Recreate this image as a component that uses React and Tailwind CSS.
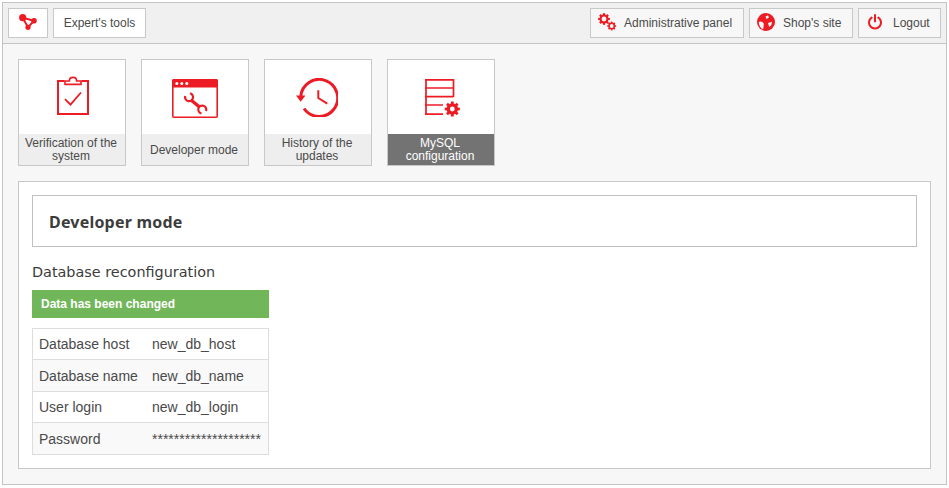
import React from 'react';

const red = '#ed1c24';

const LogoIcon = () => (
  <svg width="20" height="18" viewBox="0 0 20 18" fill="none">
    <path d="M4.7 3.7 L16 6.7 L10 13.3 Z" stroke={red} strokeWidth="2" />
    <circle cx="4.7" cy="3.7" r="3.6" fill={red} />
    <circle cx="16" cy="6.7" r="2.8" fill={red} />
    <circle cx="10" cy="13.3" r="2.6" fill={red} />
  </svg>
);

const Gear = ({ cx, cy, r, hole, bg = '#f7f7f7' }) => {
  const teeth = [0, 45, 90, 135];
  return (
    <g>
      {teeth.map((a) => (
        <rect key={a} x={cx - r * 0.24} y={cy - r * 1.3} width={r * 0.48} height={r * 2.6} fill={red} transform={`rotate(${a} ${cx} ${cy})`} />
      ))}
      <circle cx={cx} cy={cy} r={r} fill={red} />
      <circle cx={cx} cy={cy} r={hole} fill={bg} />
    </g>
  );
};

const GearsIcon = () => (
  <svg width="19" height="20" viewBox="0 0 19 20">
    <Gear cx={6} cy={6} r={4.5} hole={2.4} />
    <Gear cx={13.7} cy={13} r={3.4} hole={1.9} />
  </svg>
);

const GlobeIcon = () => (
  <svg width="18" height="18" viewBox="0 0 18 18" className="-mt-[2px]">
    <circle cx="9" cy="9" r="9" fill={red} />
    <path d="M1.8 9 C3.5 7.8 5.5 8.8 6.5 10.2 C7.4 11.6 6.2 12.8 6.6 14.2 L6 16.4 C3.5 15.4 1.8 12.4 1.8 9 Z" fill="#f7f7f7" />
    <path d="M11 10 L15 8.8 L14.4 12 L12.2 14 Z" fill="#f7f7f7" />
    <path d="M8.5 3.4 L11 2.6 L12 4.6 L9.6 6 Z" fill="#f7f7f7" />
  </svg>
);

const PowerIcon = () => (
  <svg width="14" height="16" viewBox="0 0 14 16" fill="none" stroke={red} strokeWidth="2" strokeLinecap="round" className="-mt-[3px]">
    <path d="M7 1 V7.5" />
    <path d="M3.6 3.6 A6 6 0 1 0 10.4 3.6" />
  </svg>
);

const ClipboardIcon = () => (
  <svg width="32" height="39" viewBox="0 0 32 39" fill="none" stroke={red} strokeWidth="2" className="ml-[1px] -mt-[3px]">
    <path d="M7.5 5 H1 V38 H31 V5 H24.5" />
    <path d="M8 8.4 V5 H12.4 C12.4 0.2 19.6 0.2 19.6 5 H24 V8.4 Z" strokeWidth="1.6" />
    <path d="M8 23.2 L13.5 28.6 L24 16.5" strokeWidth="1.8" />
  </svg>
);

const WindowIcon = () => (
  <svg width="46" height="39" viewBox="0 0 46 39" fill="none" className="mt-[2px]">
    <rect x="0.8" y="1" width="44.4" height="37.2" stroke={red} strokeWidth="1.6" rx="1" />
    <rect x="0" y="0" width="46" height="8.5" rx="1.5" fill={red} />
    <circle cx="4.8" cy="4.4" r="1.5" fill="#fff" />
    <circle cx="9.8" cy="4.4" r="1.5" fill="#fff" />
    <circle cx="14.8" cy="4.4" r="1.5" fill="#fff" />
    <path d="M19 21 L27.5 28" stroke={red} strokeWidth="3.4" />
    <path d="M13.2 17 A4 4 0 1 0 18 14.3" stroke={red} strokeWidth="2.2" />
    <path d="M34 32 A4 4 0 1 0 29.5 34.5" stroke={red} strokeWidth="2.2" />
  </svg>
);

const HistoryIcon = () => (
  <svg width="42" height="39" viewBox="0 0 42 39" fill="none" stroke={red} className="-ml-[3px] mt-[1px]">
    <path d="M4.7 19 A18.5 18.5 0 1 1 8 30.5" strokeWidth="3" />
    <path d="M0 17.5 H9.5 L4.7 23.8 Z" fill={red} stroke="none" />
    <path d="M22.3 12.3 V20 L31.3 25.7" strokeWidth="2" />
  </svg>
);

const TableGearIcon = () => (
  <svg width="36" height="39" viewBox="0 0 36 39" fill="none" className="ml-[3px] mt-[3px]">
    <path d="M1 0 V36 M0 0.8 H28.5 V18 M0 9 H28.5 M0 17.6 H28.5 M0 26 H18 M0 35.2 H18" stroke={red} strokeWidth="1.7" />
    <Gear cx={27.3} cy={30} r={5.8} hole={2.4} bg="#ffffff" />
  </svg>
);

const tiles = [
  { label: 'Verification of the system', icon: <ClipboardIcon /> },
  { label: 'Developer mode', icon: <WindowIcon /> },
  { label: 'History of the updates', icon: <HistoryIcon /> },
  { label: 'MySQL configuration', icon: <TableGearIcon />, active: true },
];

const rows = [
  { name: 'Database host', value: 'new_db_host', cls: 'h-[30px] bg-white' },
  { name: 'Database name', value: 'new_db_name', cls: 'h-[32px] border-t border-[#dddddd] bg-[#f9f9f9]' },
  { name: 'User login', value: 'new_db_login', cls: 'h-[31px] border-t border-[#dddddd] bg-white' },
  { name: 'Password', value: '********************', cls: 'h-[32px] border-t border-[#dddddd] bg-[#f9f9f9]' },
];

const ToolButton = ({ icon, label, white, className }) => (
  <div className={`h-[30px] flex items-center border border-[#c8c8c8] text-xs text-[#4a4a4a] ${white ? 'bg-white' : 'bg-[#f7f7f7]'} ${className}`}>
    {icon}
    {label && <span>{label}</span>}
  </div>
);

export default function App() {
  return (
    <div className="w-[949px] h-[488px] bg-white pt-[2px] pl-[2px] font-['Liberation_Sans',Arial,sans-serif]">
      <div className="w-[945px] h-[483px] border border-[#c4c4c4] bg-[#f7f7f7]">
        <div className="h-[41px] bg-[#f0f0f0] border-b border-[#c4c4c4] pt-[5px] pl-[5px] pr-[5px] flex gap-[5px]">
          <ToolButton white className="w-[40px] justify-center" icon={<LogoIcon />} />
          <ToolButton white className="w-[93px] justify-center" label="Expert's tools" />
          <div className="ml-auto flex gap-[5px]">
            <ToolButton className="w-[154px] pl-[7px] gap-[7px]" icon={<GearsIcon />} label="Administrative panel" />
            <ToolButton className="w-[104px] pl-[7px] gap-[8px]" icon={<GlobeIcon />} label="Shop's site" />
            <ToolButton className="w-[83px] pl-[9px] gap-[11px]" icon={<PowerIcon />} label="Logout" />
          </div>
        </div>

        <div className="pt-[15px] px-[15px]">
          <div className="flex gap-[15px]">
            {tiles.map((tile) => (
              <div key={tile.label} className="w-[108px] h-[107px] border border-[#c8c8c8] bg-white flex flex-col">
                <div className="h-[74px] flex items-center justify-center">{tile.icon}</div>
                <div className={`h-[31px] flex items-center justify-center text-center text-xs leading-[13px] pl-[2px] pr-[4px] pt-[1px] ${tile.active ? 'bg-[#737373] text-white' : 'bg-[#eeeeee] text-[#4a4a4a]'}`}>
                  {tile.label}
                </div>
              </div>
            ))}
          </div>

          <div className="mt-[15px] w-[913px] h-[288px] border border-[#c8c8c8] bg-white p-[13px]">
            <div className="w-[885px] h-[52px] border border-[#c0c0c0] flex items-center pl-4">
              <h1 className="pt-[1px] text-base tracking-[0.2px] font-bold text-[#3c3c3c] font-['Noto_Sans',sans-serif]">Developer mode</h1>
            </div>
            <h2 className="mt-4 text-[14.4px] leading-[18px] text-[#3c3c3c] font-['DejaVu_Sans',sans-serif]">Database reconfiguration</h2>
            <div className="mt-[9px] w-[237px] h-[28px] bg-[#72b65a] flex items-center pl-[9px] text-xs font-bold text-white">
              Data has been changed
            </div>
            <div className="mt-[10px] w-[237px] border border-[#dddddd] text-sm text-[#4a4a4a]">
              {rows.map((row) => (
                <div key={row.name} className={`flex items-center ${row.cls}`}>
                  <span className="w-[119px] pl-[6px]">{row.name}</span>
                  <span>{row.value}</span>
                </div>
              ))}
            </div>
          </div>
        </div>
      </div>
    </div>
  );
}
